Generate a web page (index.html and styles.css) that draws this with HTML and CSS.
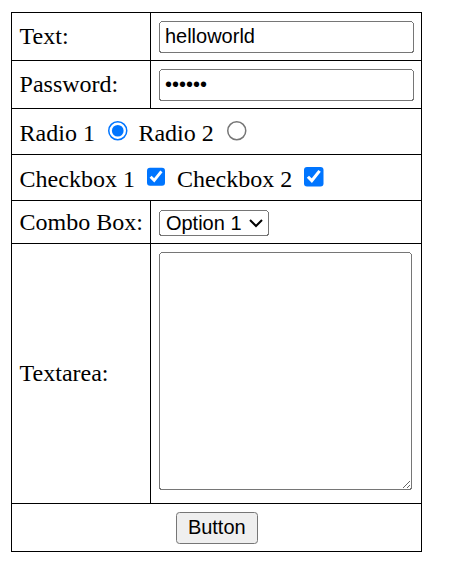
FILE: index.html
```html
<!DOCTYPE html>
<html lang="en">
<head>
<meta charset="utf-8">
<title>Form Table</title>
<link rel="stylesheet" href="styles.css">
</head>
<body class="page">
<table class="form-table">
  <tr>
    <td class="cell">Text:</td>
    <td class="cell"><input type="text" class="field" value="helloworld"></td>
  </tr>
  <tr>
    <td class="cell">Password:</td>
    <td class="cell"><input type="password" class="field" value="123456"></td>
  </tr>
  <tr>
    <td class="cell" colspan="2">Radio 1 <input type="radio" class="ctl" name="radio" checked> Radio 2 <input type="radio" class="ctl" name="radio"></td>
  </tr>
  <tr>
    <td class="cell" colspan="2">Checkbox 1 <input type="checkbox" class="ctl" checked> Checkbox 2 <input type="checkbox" class="ctl" checked></td>
  </tr>
  <tr>
    <td class="cell">Combo Box:</td>
    <td class="cell"><select class="combo"><option>Option 1</option><option>Option 2</option><option>Option 3</option></select></td>
  </tr>
  <tr>
    <td class="cell">Textarea:</td>
    <td class="cell"><textarea class="area"></textarea></td>
  </tr>
  <tr>
    <td class="cell center" colspan="2"><button type="button" class="btn">Button</button></td>
  </tr>
</table>
</body>
</html>
```
FILE: styles.css
```css
.page {
  zoom: 1.5;
  margin: 8px 8px 8px 7.4px;
  font-family: "Liberation Serif", "Times New Roman", serif;
  font-size: 16px;
  color: #000;
  background: #fff;
}

.form-table {
  border-collapse: collapse;
  border: 1px solid #000;
}

.cell {
  border: 1px solid #000;
  padding: 5px;
}

.center {
  text-align: center;
}

.field,
.combo,
.btn,
.area {
  font-family: "Liberation Sans", Arial, sans-serif;
  font-size: 13.333px;
}

.field {
  box-sizing: border-box;
  width: 170px;
}

.combo {
  box-sizing: border-box;
  width: 73.2px;
}

.area {
  box-sizing: border-box;
  width: 168.7px;
  height: 158.7px;
}
```
